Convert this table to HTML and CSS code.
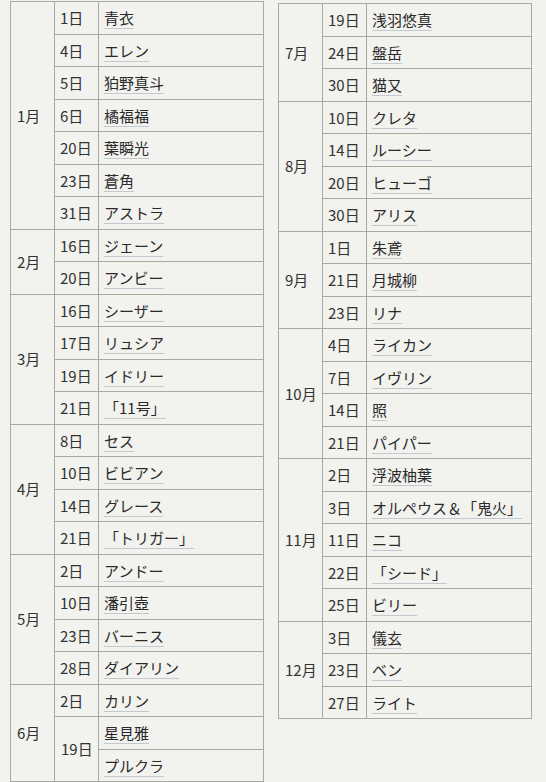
FILE: index.html
```html
<!DOCTYPE html>
<html lang="ja">
<head>
<meta charset="utf-8">
<link rel="stylesheet" href="styles.css">
</head>
<body>
<div class="wrap">
<table class="cal cal-left">
<colgroup><col class="c-m"><col class="c-d"><col class="c-n"></colgroup>
<tr><td rowspan="7">1月</td><td>1日</td><td><a>青衣</a></td></tr>
<tr><td>4日</td><td><a>エレン</a></td></tr>
<tr><td>5日</td><td><a>狛野真斗</a></td></tr>
<tr><td>6日</td><td><a>橘福福</a></td></tr>
<tr><td>20日</td><td><a>葉瞬光</a></td></tr>
<tr><td>23日</td><td><a>蒼角</a></td></tr>
<tr><td>31日</td><td><a>アストラ</a></td></tr>
<tr><td rowspan="2">2月</td><td>16日</td><td><a>ジェーン</a></td></tr>
<tr><td>20日</td><td><a>アンビー</a></td></tr>
<tr><td rowspan="4">3月</td><td>16日</td><td><a>シーザー</a></td></tr>
<tr><td>17日</td><td><a>リュシア</a></td></tr>
<tr><td>19日</td><td><a>イドリー</a></td></tr>
<tr><td>21日</td><td><a>「11号」</a></td></tr>
<tr><td rowspan="4">4月</td><td>8日</td><td><a>セス</a></td></tr>
<tr><td>10日</td><td><a>ビビアン</a></td></tr>
<tr><td>14日</td><td><a>グレース</a></td></tr>
<tr><td>21日</td><td><a>「トリガー」</a></td></tr>
<tr><td rowspan="4">5月</td><td>2日</td><td><a>アンドー</a></td></tr>
<tr><td>10日</td><td><a>潘引壺</a></td></tr>
<tr><td>23日</td><td><a>バーニス</a></td></tr>
<tr><td>28日</td><td><a>ダイアリン</a></td></tr>
<tr><td rowspan="3">6月</td><td>2日</td><td><a>カリン</a></td></tr>
<tr><td rowspan="2">19日</td><td><a>星見雅</a></td></tr>
<tr><td><a>プルクラ</a></td></tr>
</table>
<table class="cal cal-right">
<colgroup><col class="c-m"><col class="c-d"><col class="c-n"></colgroup>
<tr><td rowspan="3">7月</td><td>19日</td><td><a>浅羽悠真</a></td></tr>
<tr><td>24日</td><td><a>盤岳</a></td></tr>
<tr><td>30日</td><td><a>猫又</a></td></tr>
<tr><td rowspan="4">8月</td><td>10日</td><td><a>クレタ</a></td></tr>
<tr><td>14日</td><td><a>ルーシー</a></td></tr>
<tr><td>20日</td><td><a>ヒューゴ</a></td></tr>
<tr><td>30日</td><td><a>アリス</a></td></tr>
<tr><td rowspan="3">9月</td><td>1日</td><td><a>朱鳶</a></td></tr>
<tr><td>21日</td><td><a>月城柳</a></td></tr>
<tr><td>23日</td><td><a>リナ</a></td></tr>
<tr><td rowspan="4">10月</td><td>4日</td><td><a>ライカン</a></td></tr>
<tr><td>7日</td><td><a>イヴリン</a></td></tr>
<tr><td>14日</td><td><a>照</a></td></tr>
<tr><td>21日</td><td><a>パイパー</a></td></tr>
<tr><td rowspan="5">11月</td><td>2日</td><td><a>浮波柚葉</a></td></tr>
<tr><td>3日</td><td><a>オルペウス＆「鬼火」</a></td></tr>
<tr><td>11日</td><td><a>ニコ</a></td></tr>
<tr><td>22日</td><td><a>「シード」</a></td></tr>
<tr><td>25日</td><td><a>ビリー</a></td></tr>
<tr><td rowspan="3">12月</td><td>3日</td><td><a>儀玄</a></td></tr>
<tr><td>23日</td><td><a>ベン</a></td></tr>
<tr><td>27日</td><td><a>ライト</a></td></tr>
</table>
</div>
</body>
</html>
```

FILE: styles.css
```css
html, body {
  margin: 0;
  padding: 0;
  background: #f2f2ee;
}
body {
  font-family: "Noto Sans CJK JP", "Noto Sans", sans-serif;
  font-size: 15px;
  color: #333;
}
.wrap {
  display: flex;
  align-items: flex-start;
  gap: 14px;
  padding: 1px 0 0 10px;
}
.cal {
  border-collapse: collapse;
  table-layout: fixed;
  width: 253px;
}
.cal-right {
  margin-top: 2px;
}
.c-m { width: 44px; }
.c-d { width: 44px; }
.c-n { width: 165px; }
.cal td {
  border: 1px solid #a8a8a4;
  padding: 5px 5px;
  height: 21.5px;
  line-height: 21.5px;
  box-sizing: content-box;
  white-space: nowrap;
  vertical-align: middle;
}
.cal td:first-child[rowspan] {
  padding-left: 6px;
}
.cal a {
  color: #2a2a2a;
  text-decoration: underline;
  text-decoration-color: #c2c8d0;
  text-underline-offset: 4px;
  text-decoration-thickness: 1px;
}
```
